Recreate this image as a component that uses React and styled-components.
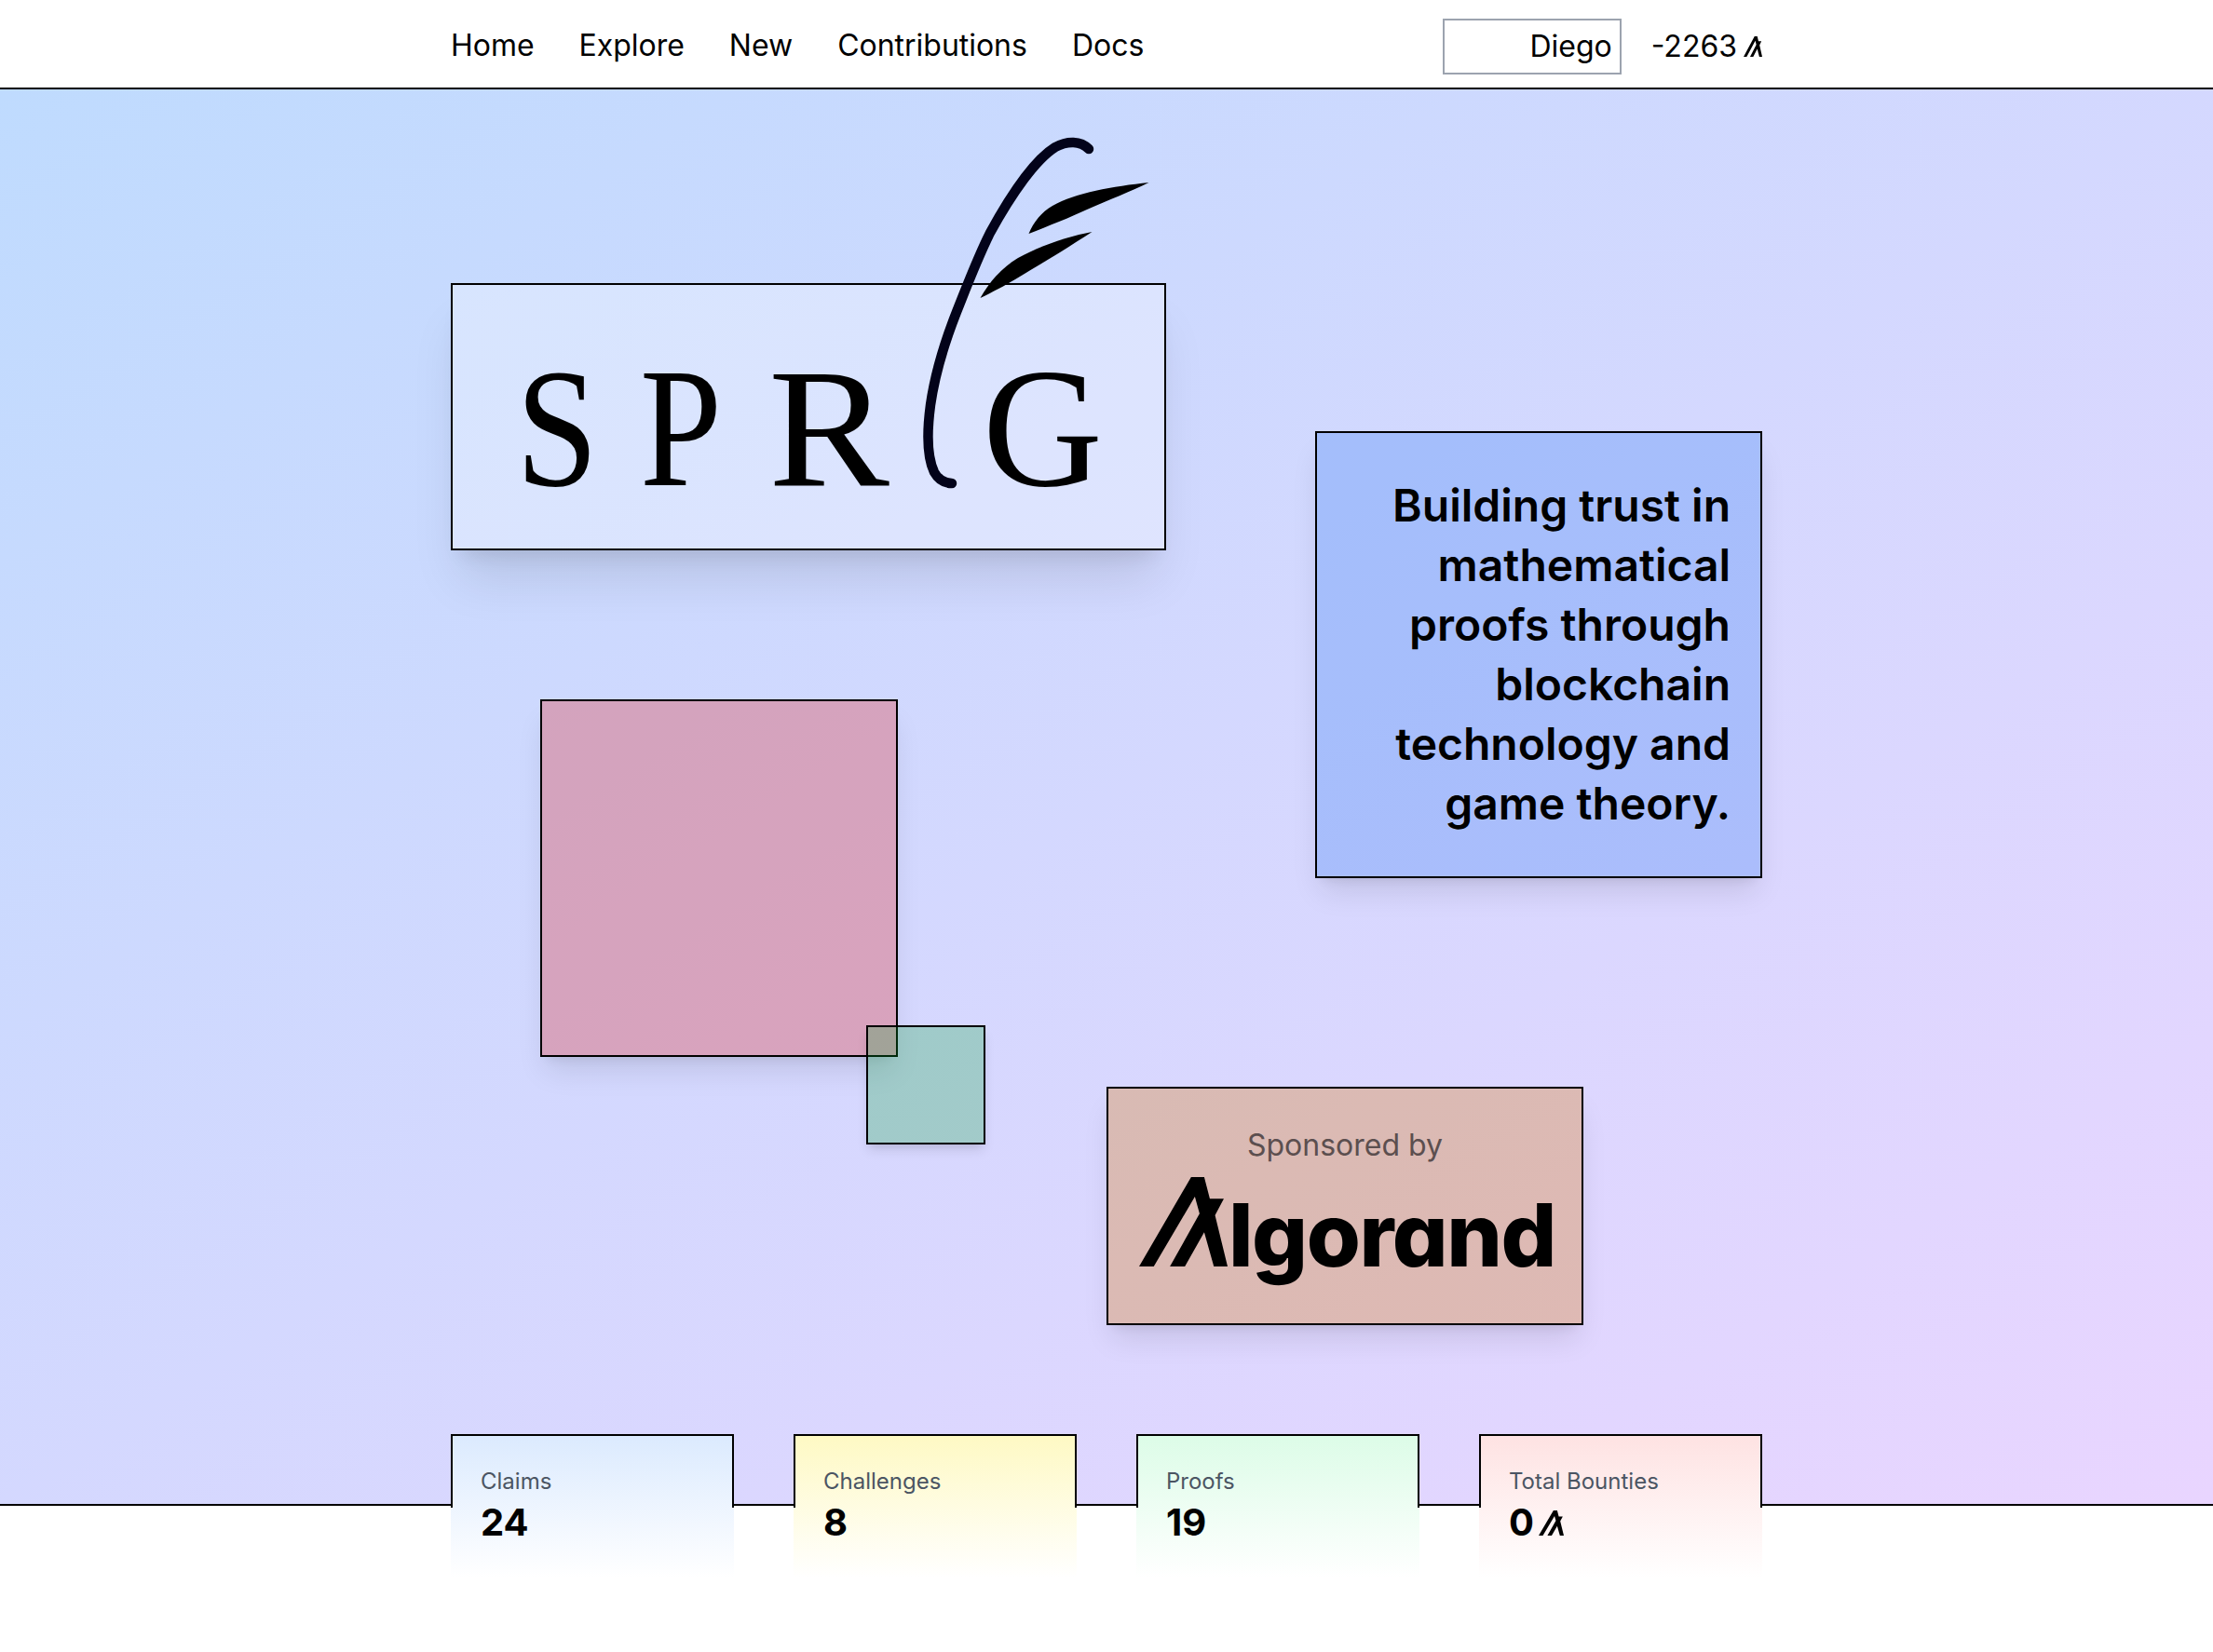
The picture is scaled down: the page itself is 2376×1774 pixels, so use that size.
import React from 'react';
import styled, { createGlobalStyle } from 'styled-components';

const Global = createGlobalStyle`
  html, body { margin: 0; padding: 0; background: #fff; }
  body { font-family: Inter, "Liberation Sans", sans-serif; color: #000; }
  * { box-sizing: border-box; }
`;

const navLinks = ['Home', 'Explore', 'New', 'Contributions', 'Docs'];

const stats = [
  { id: 1, label: 'Claims', value: '24', tint: '#dbeafe' },
  { id: 2, label: 'Challenges', value: '8', tint: '#fef9c3' },
  { id: 3, label: 'Proofs', value: '19', tint: '#dcfce7' },
  { id: 4, label: 'Total Bounties', value: '0', tint: '#fee2e2', algo: true },
];

const logoLetters = [
  { char: 'S', width: 132.5, scale: 0.87 },
  { char: 'P', width: 138.5, scale: 0.87 },
  { char: 'R', width: 229.5, scale: 1.07 },
  { char: 'G', width: 130, scale: 0.98 },
];

const AlgoMark = ({ width, height }) => (
  <svg width={width} height={height} viewBox="0 0 94.7 96" preserveAspectRatio="none" fill="#000">
    <path d="M55.7 0H69.7L75.7 23.3H90.7L81.3 41L94.7 96H80L69.7 59.3L49 96H33L64.7 39.3L59.7 21L15.7 96H0Z" />
  </svg>
);

const Quill = () => (
  <QuillSvg viewBox="484 140 768 400" width="768" height="400">
    <path
      fill="none"
      stroke="#03031a"
      strokeWidth="10.5"
      strokeLinecap="round"
      d="M1169 160C1160 151 1146 151 1133 158C1112 171 1086 208 1063 250C1049 278 1037 310 1027 335C1014 368 1004 400 999 435C995 465 995 490 1003 507C1008 516 1014 519 1022 519"
    />
    <path fill="#000" d="M1233.5 196C1195 200 1155 207 1130 221C1118 228 1110 238 1104.5 251C1125 243 1150 233 1167 225C1190 215 1215 205 1233.5 196Z" />
    <path fill="#000" d="M1172.5 249C1145 254 1115 265 1093 277C1075 288 1062 303 1052.5 320C1065 314 1080 306 1090 300C1115 285 1145 267 1172.5 249Z" />
  </QuillSvg>
);

const App = () => (
  <>
    <Global />
    <Header>
      <HeaderInner>
        <Nav>
          {navLinks.map((link) => (
            <NavLink key={link}>{link}</NavLink>
          ))}
        </Nav>
        <Account>
          <NameBox>Diego</NameBox>
          <Balance>
            -2263
            <AlgoMark width={20} height={22} />
          </Balance>
        </Account>
      </HeaderInner>
    </Header>

    <Hero>
      <HeroInner>
        <TopGrid>
          <LeftColumn>
            <LogoCard>
              {logoLetters.map((l) => (
                <LogoLetter key={l.char} $width={l.width} $scale={l.scale}>
                  {l.char}
                </LogoLetter>
              ))}
              <Quill />
            </LogoCard>
            <PinkSquare>
              <GreenSquare />
            </PinkSquare>
          </LeftColumn>
          <Blurb>Building trust in mathematical proofs through blockchain technology and game theory.</Blurb>
        </TopGrid>
        <SponsorCard>
          <SponsorLabel>Sponsored by</SponsorLabel>
          <SponsorLogo>
            <AlgoMark width={95} height={96} />
            <SponsorName>lgorand</SponsorName>
          </SponsorLogo>
        </SponsorCard>
      </HeroInner>
    </Hero>

    <Stats>
      {stats.map((stat) => (
        <StatCard key={stat.id} $tint={stat.tint}>
          <StatLabel>{stat.label}</StatLabel>
          <StatValue>
            {stat.value}
            {stat.algo && <AlgoMark width={27} height={27} />}
          </StatValue>
        </StatCard>
      ))}
    </Stats>
  </>
);

export default App;

const Header = styled.header`
  height: 96px;
  border-bottom: 2px solid #000;
  background: #fff;
`;

const HeaderInner = styled.div`
  width: 1408px;
  height: 94px;
  margin: 0 auto;
  padding-top: 6px;
  display: flex;
  align-items: center;
  justify-content: space-between;
`;

const Nav = styled.nav`
  display: flex;
  gap: 48px;
  margin-top: -2px;
`;

const NavLink = styled.a`
  font-size: 32px;
  line-height: 48px;
  letter-spacing: -0.02px;
  color: #000;
`;

const Account = styled.div`
  display: flex;
  align-items: center;
  gap: 32px;
`;

const NameBox = styled.div`
  width: 192px;
  height: 60px;
  padding: 0 8px;
  border: 2px solid #9ca3af;
  font-size: 32px;
  line-height: 56px;
  text-align: right;
`;

const Balance = styled.div`
  display: flex;
  align-items: center;
  gap: 7px;
  font-size: 32px;
  line-height: 48px;
`;

const Hero = styled.section`
  height: 1521px;
  border-bottom: 2px solid #000;
  background: linear-gradient(to bottom right, #bfdbfe, #e9d5ff);
`;

const HeroInner = styled.div`
  width: 1408px;
  margin: 0 auto;
  padding-top: 208px;
`;

const TopGrid = styled.div`
  display: flex;
  justify-content: space-between;
  align-items: flex-start;
`;

const LeftColumn = styled.div`
  width: 768px;
  display: flex;
  flex-direction: column;
  gap: 160px;
`;

const LogoCard = styled.div`
  position: relative;
  display: flex;
  height: 287px;
  padding: 63px 0 0 68px;
  border: 2px solid #000;
  background: rgba(255, 255, 255, 0.3);
  box-shadow: 0 40px 50px -10px rgba(0, 0, 0, 0.1), 0 16px 20px -12px rgba(0, 0, 0, 0.1);
`;

const LogoLetter = styled.span`
  display: block;
  width: ${(p) => p.$width}px;
  font-family: 'Liberation Serif', serif;
  font-size: 182px;
  line-height: 182px;
  transform: scaleX(${(p) => p.$scale});
  transform-origin: left center;
`;

const QuillSvg = styled.svg`
  position: absolute;
  left: -2px;
  top: -166px;
`;

const PinkSquare = styled.div`
  position: relative;
  width: 384px;
  height: 384px;
  margin-left: 96px;
  border: 2px solid #000;
  background: rgba(225, 40, 40, 0.3);
  box-shadow: 0 20px 30px -6px rgba(0, 0, 0, 0.1), 0 8px 12px -8px rgba(0, 0, 0, 0.1);
`;

const GreenSquare = styled.div`
  position: absolute;
  left: 348px;
  top: 348px;
  width: 128px;
  height: 128px;
  border: 2px solid #000;
  background: rgba(0, 164, 42, 0.25);
  box-shadow: 0 8px 12px -2px rgba(0, 0, 0, 0.1), 0 4px 8px -4px rgba(0, 0, 0, 0.1);
`;

const Blurb = styled.div`
  width: 480px;
  height: 480px;
  margin-top: 159px;
  padding: 0 32px;
  display: flex;
  align-items: center;
  border: 2px solid #000;
  background: rgba(59, 130, 246, 0.3);
  box-shadow: 0 20px 30px -6px rgba(0, 0, 0, 0.1), 0 8px 12px -8px rgba(0, 0, 0, 0.1);
  font-size: 48px;
  line-height: 64px;
  font-weight: 600;
  text-align: right;
`;

const SponsorCard = styled.div`
  width: 512px;
  height: 256px;
  margin: 32px 0 0 704px;
  padding-top: 37px;
  border: 2px solid #000;
  background: rgba(217, 119, 6, 0.3);
  box-shadow: 0 20px 30px -6px rgba(0, 0, 0, 0.1), 0 8px 12px -8px rgba(0, 0, 0, 0.1);
  text-align: center;
`;

const SponsorLabel = styled.div`
  font-size: 32px;
  line-height: 48px;
  color: #5c4f4f;
`;

const SponsorLogo = styled.div`
  display: flex;
  align-items: baseline;
  margin: 10px 0 0 33px;
`;

const SponsorName = styled.span`
  margin-left: 1px;
  font-size: 94px;
  line-height: 1;
  font-weight: 800;
  letter-spacing: -1.5px;
  font-feature-settings: 'cv11';
`;

const Stats = styled.div`
  width: 1408px;
  margin: -77px auto 0;
  display: flex;
  justify-content: space-between;
  position: relative;
`;

const StatCard = styled.div`
  position: relative;
  width: 304px;
  height: 154px;
  padding: 35px 32px 0;
  background: linear-gradient(to bottom, ${(p) => p.$tint}, #fff);

  &::before {
    content: '';
    position: absolute;
    inset: 0 0 auto 0;
    height: 77px;
    border: 2px solid #000;
    border-bottom: none;
  }
`;

const StatLabel = styled.div`
  font-size: 24px;
  line-height: 32px;
  color: #4b5563;
`;

const StatValue = styled.div`
  display: flex;
  align-items: center;
  gap: 5px;
  font-size: 40px;
  line-height: 56px;
  font-weight: 700;
`;
